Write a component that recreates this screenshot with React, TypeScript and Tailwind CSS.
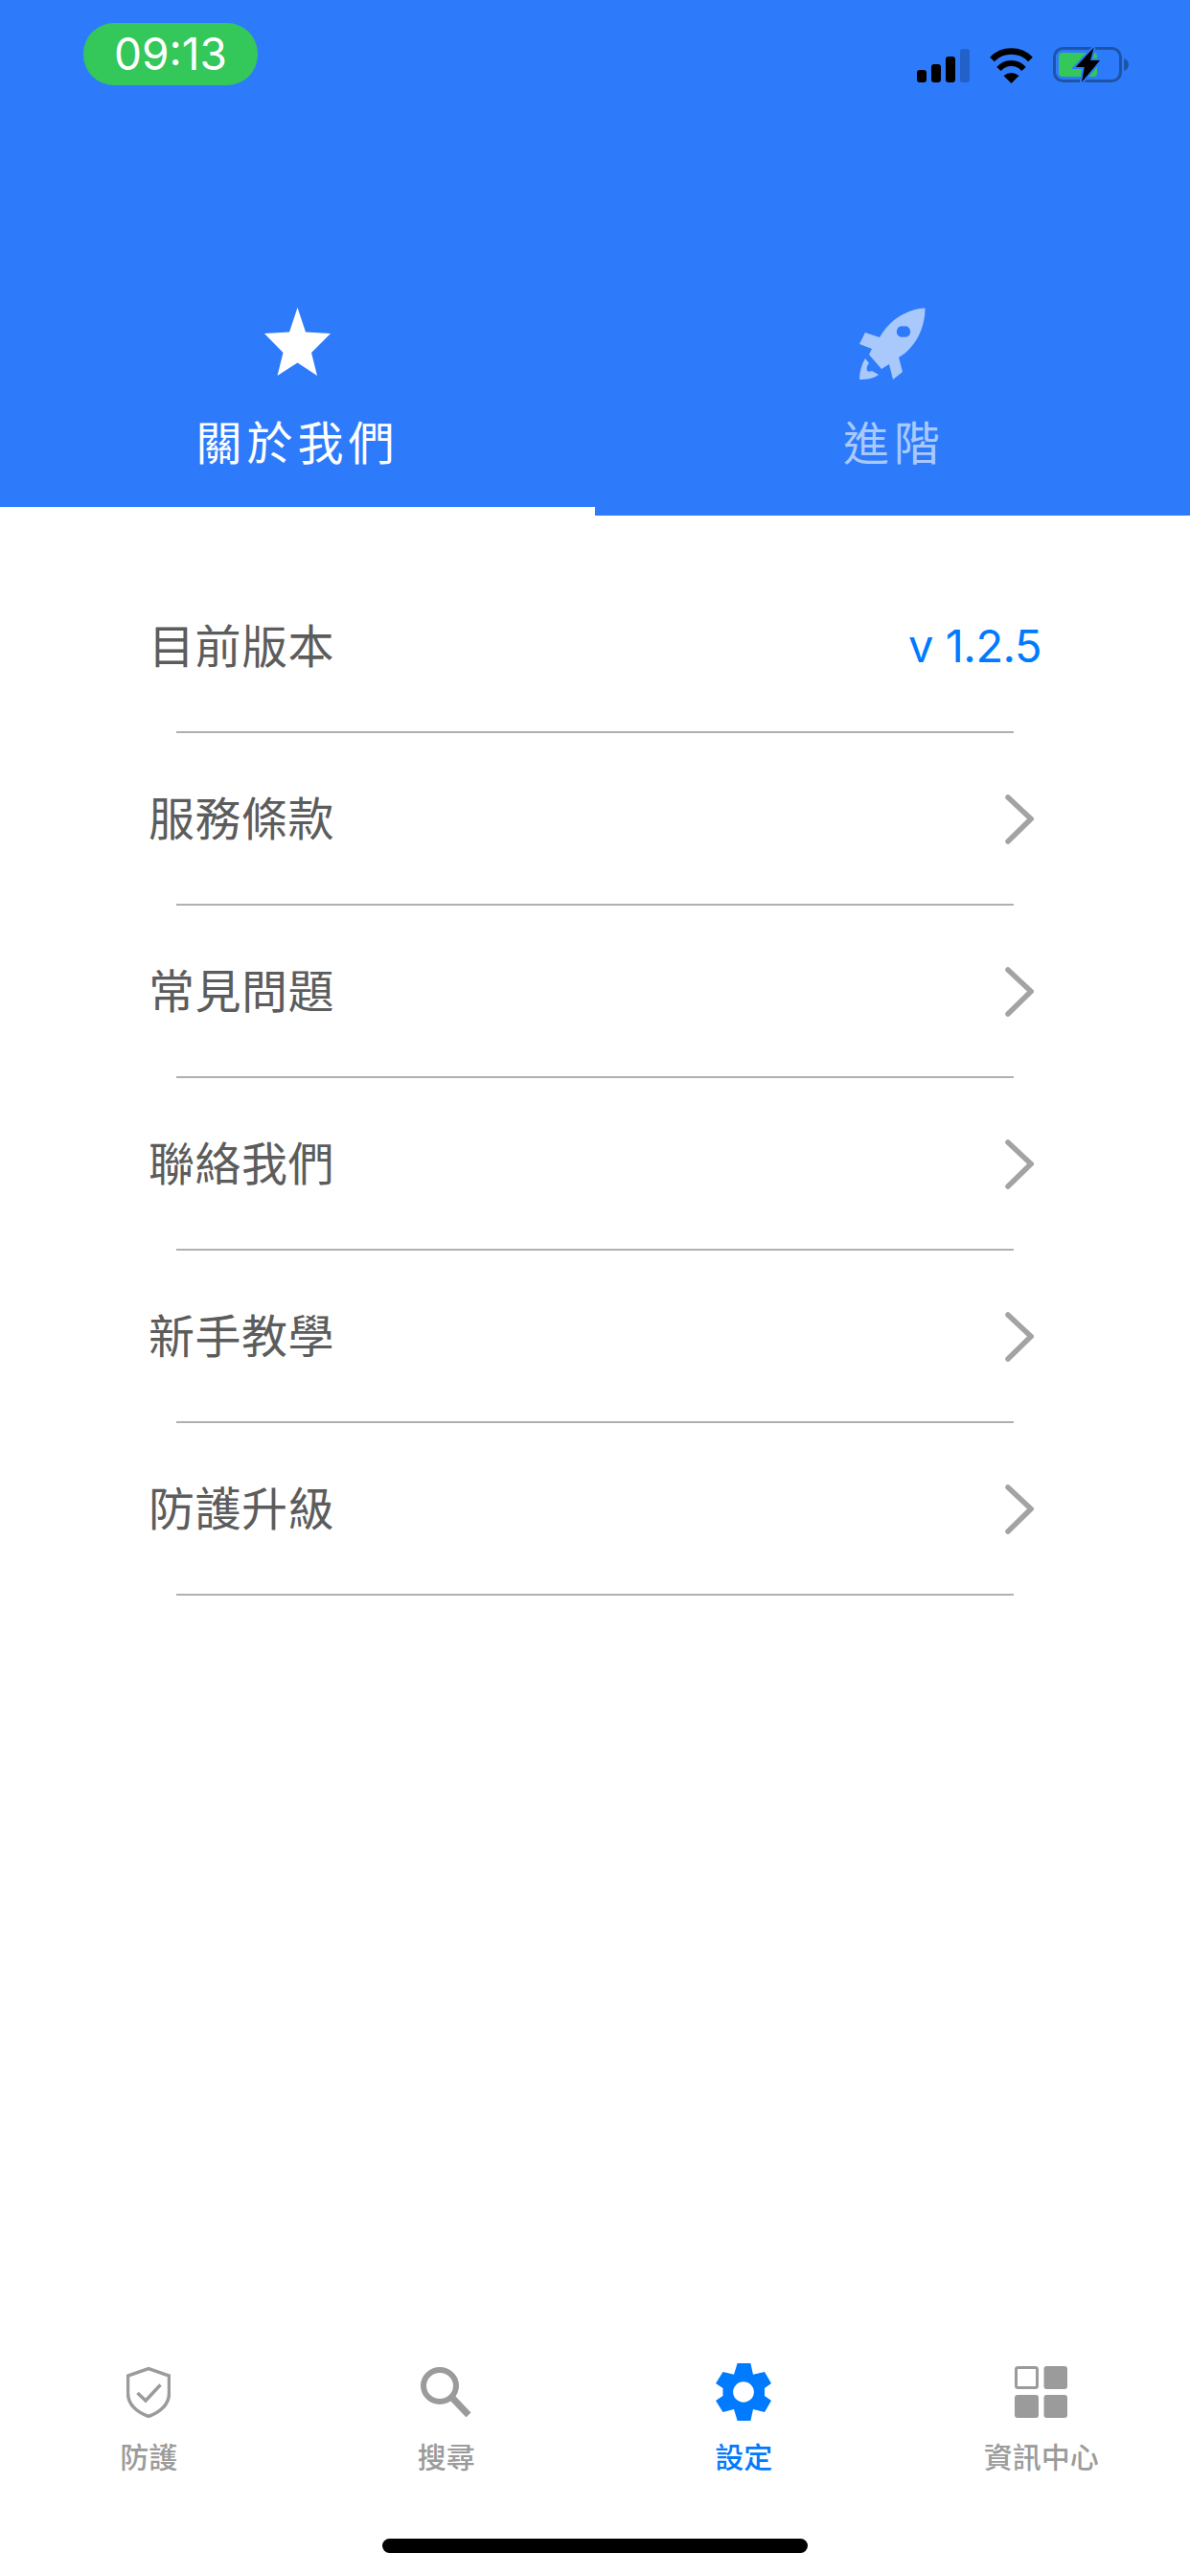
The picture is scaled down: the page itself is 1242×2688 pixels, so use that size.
const cjk = "font-['Noto_Sans_CJK_TC','Noto_Sans',sans-serif]";

const rows = ["服務條款", "常見問題", "聯絡我們", "新手教學", "防護升級"];

function Signal() {
  return (
    <svg width="55" height="35" viewBox="0 0 55 35">
      <rect x="0" y="22" width="10" height="13" rx="3" fill="#000" />
      <rect x="15" y="16" width="10" height="19" rx="3" fill="#000" />
      <rect x="30" y="8" width="10" height="27" rx="3" fill="#000" />
      <rect x="45" y="0" width="10" height="35" rx="3" fill="#2361c8" />
    </svg>
  );
}

function Wifi() {
  return (
    <svg width="47" height="37" viewBox="0 0 47 37" fill="none">
      <path d="M3.5 12 A28 28 0 0 1 43.5 12" stroke="#000" strokeWidth="6.5" />
      <path d="M10.5 22 A17 17 0 0 1 36.5 22" stroke="#000" strokeWidth="6" />
      <path d="M15.5 29 Q23.5 23 31.5 29 L23.5 37 Z" fill="#000" />
    </svg>
  );
}

function Battery() {
  return (
    <svg width="80" height="38" viewBox="0 0 80 38" fill="none">
      <rect x="1.5" y="1.5" width="69" height="34" rx="9" stroke="#1d54a8" strokeWidth="3" />
      <rect x="6" y="6" width="40" height="25" rx="4" fill="#34c759" />
      <path d="M74 12 C77 13 79 15 79 18.5 C79 22 77 24 74 25 Z" fill="#1d54a8" />
      <path d="M42.7 0.5 L23.7 21 L32.7 21 L30 36.7 L49 14 L39 14 Z" fill="#000" stroke="#2d7bfb" strokeWidth="4" paintOrder="stroke" />
    </svg>
  );
}

function Star() {
  return (
    <svg width="69" height="71" viewBox="0 0 69 71">
      <path d="M34.5 0 L43 25.5 L69 27 L49 47 L55 71 L34.5 57.5 L13.5 71 L19.5 47 L0 27 L26 25.5 Z" fill="#fff" />
    </svg>
  );
}

function Rocket() {
  return (
    <svg width="70" height="76" viewBox="0 0 70 76">
      <path
        fillRule="evenodd"
        d="M68.5 0.4 C50 1.5 32 12 21 31 L6 26 L0 38 L13 43 L10 49 L23 64 L31 59 L35 75 L45 67 L41 52 C58 42 68.5 22 68.5 0.4 Z M46 19.5 A5.5 5.8 0 1 0 46 30.5 A5.5 5.8 0 1 0 46 19.5 Z"
        fill="#a9c9fd"
      />
      <path d="M6 53 C2 60 0 67 0 75 C8 75 15 74 20 70 L13 66 C11 67 10 67 8 66 C7 63 8 60 10 58 Z" fill="#a9c9fd" />
    </svg>
  );
}

function Chevron() {
  return (
    <svg width="32" height="54" viewBox="0 0 32 54" fill="none">
      <path d="M5 4 L29 26.5 L5 50" stroke="#a3a3a3" strokeWidth="5.5" strokeLinecap="round" />
    </svg>
  );
}

function Shield() {
  return (
    <svg width="46" height="53" viewBox="0 0 46 53" fill="none" stroke="#9b9b9b">
      <path d="M23 1.6 L44.5 9 V27 C44.5 39 35 47 23 51.5 C11 47 1.5 39 1.5 27 V9 Z" strokeWidth="3.5" />
      <path d="M11.5 27 L20 35 L35.5 18.5" strokeWidth="3.5" />
    </svg>
  );
}

function Search() {
  return (
    <svg width="53" height="52" viewBox="0 0 53 52" fill="none" stroke="#9b9b9b">
      <ellipse cx="20" cy="19.5" rx="17" ry="16.5" strokeWidth="6" />
      <path d="M33 32 L50 50" strokeWidth="7" />
    </svg>
  );
}

function Gear() {
  return (
    <svg width="58" height="60" viewBox="0 0 58 60">
      <path
        fillRule="evenodd"
        d="M22.6 0 H36.4 L39 11.7 L51 9 L58 21 L51 26 V34 L58 39 L51 51 L39 48 L36.4 60 H22.6 L19 48 L7.5 51 L0 39 L7.5 34 V26 L0 21 L7.5 9 L19 11.7 Z M29 19.3 A10.9 10.7 0 1 0 29 40.7 A10.9 10.7 0 1 0 29 19.3 Z"
        fill="#007aff"
      />
    </svg>
  );
}

function Grid() {
  return (
    <svg width="55" height="54" viewBox="0 0 55 54">
      <rect x="1.5" y="1.5" width="22" height="21" rx="2" fill="none" stroke="#9b9b9b" strokeWidth="3" />
      <rect x="30.5" y="0" width="24.5" height="24" rx="3" fill="#9b9b9b" />
      <rect x="0" y="30" width="25" height="24" rx="3" fill="#9b9b9b" />
      <rect x="30.5" y="30" width="24.5" height="24" rx="3" fill="#9b9b9b" />
    </svg>
  );
}

const tabs = [
  { label: "防護", icon: <Shield />, active: false },
  { label: "搜尋", icon: <Search />, active: false },
  { label: "設定", icon: <Gear />, active: true },
  { label: "資訊中心", icon: <Grid />, active: false },
];

export default function App() {
  return (
    <div className={`flex h-[2688px] w-[1242px] flex-col overflow-hidden bg-white ${cjk}`}>
      <header className="flex h-[538px] flex-col bg-[#2d7bfb]">
        <div className="flex items-start justify-between pl-[87px] pr-[63px] pt-[24px]">
          <div className="flex h-[65px] w-[182px] items-center justify-center rounded-[32px] bg-[#34c759] font-['Inter',sans-serif] text-[46px] text-white">
            09:13
          </div>
          <div className="flex items-center pt-[25px]">
            <Signal />
            <div className="ml-[20px]">
              <Wifi />
            </div>
            <div className="ml-[20px]">
              <Battery />
            </div>
          </div>
        </div>
        <div className="flex flex-1">
          <div className="flex w-[621px] flex-col items-center border-b-[9px] border-white pt-[232px]">
            <Star />
            <span className="mt-[37px] text-[48px] leading-[60px] tracking-[5px] text-white">關於我們</span>
          </div>
          <div className="flex w-[621px] flex-col items-center pt-[232px]">
            <Rocket />
            <span className="ml-[3px] mt-[32px] text-[48px] leading-[60px] tracking-[5px] text-[#a9c9fd]">進階</span>
          </div>
        </div>
      </header>

      <main className="flex-1 pt-[47px]">
        <div className="relative flex h-[180px] items-center justify-between pl-[155px] pr-[155px]">
          <span className="pb-[8px] text-[48px] tracking-[0.5px] text-[#5c5c5c]">目前版本</span>
          <span className="pb-[2px] font-['Inter',sans-serif] text-[47px] tracking-[-0.5px] text-[#007aff]">v 1.2.5</span>
          <div className="absolute bottom-0 left-[184px] right-[184px] h-[2px] bg-[#b0b0b0]" />
        </div>
        {rows.map((row) => (
          <div key={row} className="relative flex h-[180px] items-center justify-between pl-[155px] pr-[163px]">
            <span className="pb-[8px] text-[48px] tracking-[0.5px] text-[#5c5c5c]">{row}</span>
            <Chevron />
            <div className="absolute bottom-0 left-[184px] right-[184px] h-[2px] bg-[#b0b0b0]" />
          </div>
        ))}
      </main>

      <nav className="grid grid-cols-4">
        {tabs.map((tab) => (
          <div key={tab.label} className="flex flex-col items-center">
            <div className="flex h-[60px] items-center justify-center">{tab.icon}</div>
            <span className={`mt-[18px] text-[30px] font-medium leading-[36px] ${tab.active ? "text-[#007aff]" : "text-[#9b9b9b]"}`}>
              {tab.label}
            </span>
          </div>
        ))}
      </nav>
      <div className="flex justify-center pb-[24px] pt-[69px]">
        <div className="h-[15px] w-[444px] rounded-full bg-black" />
      </div>
    </div>
  );
}
